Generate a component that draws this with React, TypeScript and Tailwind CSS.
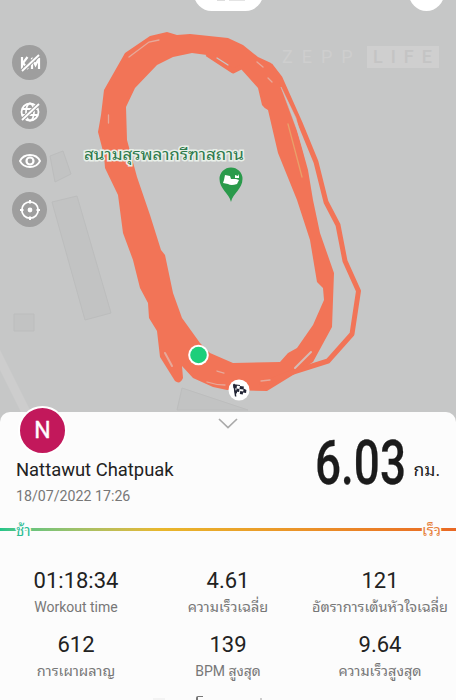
import type { ReactNode } from "react";

const stats = [
  { value: "01:18:34", label: "Workout time" },
  { value: "4.61", label: "ความเร็วเฉลี่ย", thai: true },
  { value: "121", label: "อัตราการเต้นหัวใจเฉลี่ย", thai: true },
  { value: "612", label: "การเผาผลาญ", thai: true },
  { value: "139", label: "BPM สูงสุด" },
  { value: "9.64", label: "ความเร็วสูงสุด", thai: true },
];

function Track() {
  return (
    <svg className="absolute inset-0" width="456" height="420" viewBox="0 0 456 420">
      <g fill="#c2c3c3" stroke="#bcbdbd" strokeWidth="1">
        <path d="M50 156l13-5 8 23-16 8z" />
        <path d="M52 202l25-6 34 117-26 7z" />
        <path d="M14 314h20v17h-20z" />
        <path d="M182 388l66 22h-71z" />
      </g>
      <path d="M-4 352L32 424" stroke="#cdcdcd" strokeWidth="9" />
      <path
        fill="#f27457"
        fillRule="evenodd"
        d="M167 32L150 36L125 53L104 90L101 115L98 132L104 155L105 168L118 195L123 233L133 260L140 288L148 303L149 318L157 331L160 357L175 381Q180 385 183 378L182 366L193 378L213 387L227 390L267 391L293 375L313 362L332 327L334 273L320 233L313 200L308 170L297 130L284 90L280 75L271 63L258 57L243 45L228 38L190 34L177 35Z
        M192 53L207 55L228 69L233 71L241 69L258 88L262 105Q264 108 268 110L278 153L297 200L310 240L317 282L323 288L324 300L313 325L297 348L288 353L280 362L233 363L210 353L200 343L182 318L173 293L165 255L161 250L150 215L137 177L127 140L126 107L135 88L157 65L173 57Z"
      />
      <path
        d="M270 65L280 78L300 123L316 162L326 202L338 225L345 261L358.500 291L352 334L328 361L290 373L260 385"
        fill="none"
        stroke="#f27457"
        strokeWidth="5"
        strokeLinejoin="round"
      />
      <path d="M207 54L233 71L241 67" fill="none" stroke="#f27457" strokeWidth="5" strokeLinejoin="round" />
      <g fill="none" stroke="#e6a99a" strokeWidth="1.300" strokeLinecap="round">
        <path d="M129 57L149 42L159 40" />
        <path d="M108.500 115v8" />
        <path d="M217 58L228 65" stroke="#c6c7c7" />
        <path d="M257 62l6 5M268 78l4 4" />
        <path d="M288 124L302 177" stroke="#e8a06a" />
        <path d="M165 353l7 13" strokeWidth="2" />
        <path d="M217 371l7 2M207 382q9 3 18 3M261 381l9-1" />
        <path d="M295 368L311 352" strokeWidth="2" stroke="#d4bdb8" />
      </g>
      <path d="M281 87L297 130L309 168L296 118z" fill="#c6c7c7" stroke="#c6c7c7" strokeWidth="0.500" />

      <path d="M231 202C229 193 219.500 189 219.500 179a11.500 11.500 0 0 1 23 0C242.500 189 233 193 231 202z" fill="#2a9a4b" />
      <path d="M224 180l1-5 5 1 1 3 5 0 3 1-2 4q-6 2-9 0l-5-1zM235 175l3 1 1-2v4h-4z" fill="#fff" />

      <circle cx="198.500" cy="355" r="10.300" fill="#fff" />
      <circle cx="198.500" cy="355" r="8.300" fill="#1dcf7b" />
      <circle cx="239" cy="390" r="10.500" fill="#fff" />
      <g transform="translate(233 385) rotate(8)" fill="#222535">
        <path d="M0-1l1.500-.5L5 11H3.500z" />
        <path d="M0 0h4v3H1zM7 0h4v3H7zM4 3h3v3H4zM11 2l3 1v3h-3zM2 5h3v3H3zM8 5h3v3H8zM1-1h6v1H1z" />
      </g>
    </svg>
  );
}

function MapButton({ children }: { children: ReactNode }) {
  return (
    <div className="flex h-[35px] w-[35px] items-center justify-center rounded-full bg-[#9e9e9e]">
      <svg width="24" height="24" viewBox="0 0 24 24" fill="none" stroke="#fff" strokeWidth="1.800">
        {children}
      </svg>
    </div>
  );
}

export default function App() {
  return (
    <div className="relative flex h-[700px] w-[456px] flex-col overflow-hidden bg-[#c6c7c7] font-[Roboto,'Noto_Sans_Thai_Looped',Loma,Waree,'Noto_Sans',sans-serif]">
      <div className="relative h-[412px] shrink-0">
        <Track />
        <div className="absolute -top-6 left-[194px] h-[35px] w-[69px] rounded-full bg-white" />
        <div className="absolute left-[217px] top-0 flex gap-1">
          <i className="h-px w-2 bg-[#ddd]" />
          <i className="h-px w-4 bg-[#e4e4e4]" />
        </div>
        <div className="absolute -top-6 left-[409px] h-[35px] w-[35px] rounded-full bg-white" />
        <div className="absolute left-[282px] top-[46px] flex items-center text-[18px] leading-[22px] text-[#cecece]">
          <span className="w-[85px] tracking-[9px]">ZEPP</span>
          <span className="h-[22px] w-[72px] bg-[#cfcfcf] pl-1.5 font-medium tracking-[8px] text-[#c4c4c4]">LIFE</span>
        </div>
        <div className="absolute left-3 top-[45px] flex flex-col gap-[14px]">
          <MapButton>
            <path d="M4 6v12M9.500 6L5 12l5 6M14 18V7l3.500 7L21 7v11" strokeWidth="2.200" />
            <path d="M4 20L21 4" stroke="#9e9e9e" strokeWidth="4" />
            <path d="M4 20L21 4" />
          </MapButton>
          <MapButton>
            <circle cx="12" cy="12" r="8.500" />
            <ellipse cx="12" cy="12" rx="4" ry="8.500" />
            <path d="M4 9h16M4 15h16" />
            <path d="M4 20L21 4" stroke="#9e9e9e" strokeWidth="4" />
            <path d="M4 20L21 4" />
          </MapButton>
          <MapButton>
            <path d="M2 12C6 4 18 4 22 12C18 20 6 20 2 12z" />
            <circle cx="12" cy="12" r="3.500" strokeWidth="2.200" />
          </MapButton>
          <MapButton>
            <circle cx="12" cy="12" r="8.200" />
            <path d="M12 2v3.500M12 18.500v3.500M2 12h3.500M18.500 12h3.500" strokeWidth="2" />
            <circle cx="12" cy="12" r="2.400" fill="#fff" stroke="none" />
          </MapButton>
        </div>
        <div className="absolute left-[84px] top-[144px] origin-left scale-x-[1.070] whitespace-nowrap text-[16px] leading-[22px] text-[#2c7a4b] [paint-order:stroke_fill] [-webkit-text-stroke:3px_#e9efe9]">
          สนามสุรพลากรีฑาสถาน
        </div>
      </div>

      <div className="relative h-[288px] shrink-0 rounded-t-[10px] bg-[#fcfcfc]">
        <svg className="absolute left-[218px] top-[6px]" width="20" height="12" viewBox="0 0 20 12" fill="none" stroke="#aaa" strokeWidth="1.700">
          <path d="M1 1l9 8.500L19 1" />
        </svg>
        <div className="absolute -top-[6px] left-[18px] flex h-[49px] w-[49px] items-center justify-center rounded-full border-2 border-white bg-[#c2185b] pt-0.5 text-[23px] text-white [-webkit-text-stroke:0.400px_#fff]">
          N
        </div>
        <div className="flex h-[112px] justify-between pl-4 pr-4 pt-[46px]">
          <div>
            <div className="whitespace-nowrap text-[18.400px] leading-6 text-[#222]">Nattawut Chatpuak</div>
            <div className="mt-[4px] text-[14.200px] leading-5 text-[#777]">18/07/2022 17:26</div>
          </div>
          <div className="-mt-[30px] flex h-[70px]">
            <span className="w-[90px] text-[62px] leading-[70px] text-[#1b1b1b]">
              <span className="inline-block origin-left scale-x-[0.74] font-medium [-webkit-text-stroke:0.300px_#1b1b1b]">6.03</span>
            </span>
            <span className="ml-2 mt-[30px] whitespace-nowrap text-[17.500px] leading-6 text-[#222]">กม.</span>
          </div>
        </div>

        <div className="flex h-[10px] items-center">
          <div className="relative h-[3px] w-full bg-linear-to-r from-[#20c58a] via-[#e8b72c] via-35% to-[#e96824]">
            <span className="absolute -top-[7px] left-4 text-[15px] leading-5 text-[#2bbd94] [paint-order:stroke_fill] [-webkit-text-stroke:3px_#fcfcfc]">ช้า</span>
            <span className="absolute -top-[7px] right-[15px] text-[15px] leading-5 text-[#e7813c] [paint-order:stroke_fill] [-webkit-text-stroke:3px_#fcfcfc]">เร็ว</span>
          </div>
        </div>

        <div className="grid grid-cols-3 gap-y-4 pt-8">
          {stats.map((stat) => (
            <div key={stat.value} className="flex h-12 flex-col items-center">
              <span className="text-[22px] leading-[29px] text-[#222]">{stat.value}</span>
              <span
                className={
                  stat.thai
                    ? "whitespace-nowrap text-[14.500px] leading-[26px] text-[#777]"
                    : "whitespace-nowrap text-[14px] leading-[25px] text-[#777]"
                }
              >
                {stat.label}
              </span>
            </div>
          ))}
        </div>
        <div className="absolute bottom-0 left-[153px] flex h-[4px] items-start">
          <i className="mt-[2px] h-[2px] w-3 bg-[#f3f3f3]" />
          <i className="ml-[31px] h-[4px] w-[7px] rounded-tl-[2px] border-l-2 border-t-[1.500px] border-[#777]" />
          <i className="ml-[57px] mt-[2px] h-[2px] w-[2px] bg-[#ccc]" />
        </div>
      </div>
    </div>
  );
}
